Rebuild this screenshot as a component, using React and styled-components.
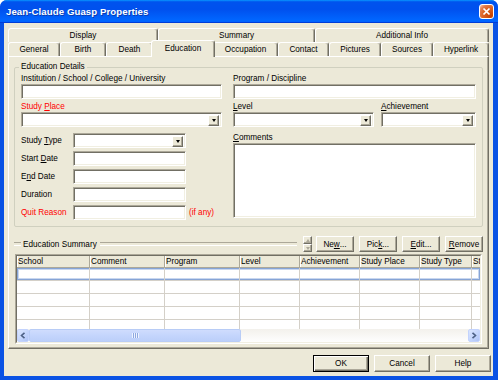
import React from 'react';
import styled, { createGlobalStyle, css } from 'styled-components';

const GlobalStyle = createGlobalStyle`
  html, body { margin: 0; padding: 0; background: #fff; }
  body {
    font-family: "Liberation Sans", Arial, sans-serif;
    font-size: 8.2px;
    color: #000;
  }
  * { box-sizing: border-box; }
`;

const raised = css`
  background: #ece9d8;
  border: 1px solid;
  border-color: #fff #716f64 #716f64 #fff;
  box-shadow: inset -1px -1px 0 #aca899;
`;

const sunken = css`
  background: #fff;
  border: 1px solid;
  border-color: #aca899 #fff #fff #aca899;
  box-shadow: inset 1px 1px 0 #716f64, inset -1px -1px 0 #f1efe2;
`;

const etched = css`
  height: 2px;
  border-top: 1px solid #aca899;
  border-bottom: 1px solid #fff;
`;

const Window = styled.div`
  width: 498px;
  height: 380px;
  display: flex;
  flex-direction: column;
  background: #0a52e4;
  border-radius: 7px 7px 0 0;
  overflow: hidden;
`;

const TitleBar = styled.div`
  height: 23px;
  flex: none;
  display: flex;
  align-items: center;
  justify-content: space-between;
  padding: 0 4px 0 6px;
  background: linear-gradient(to bottom, #0997ff 0%, #0053ee 8%, #0050ee 40%, #0066ff 88%, #0066ff 93%, #005bff 95%, #003dd7 96%, #003dd7 100%);
`;

const Title = styled.div`
  color: #fff;
  font-weight: bold;
  font-size: 9.6px;
  letter-spacing: 0.1px;
  text-shadow: 1px 1px 0 #0a3cb0;
`;

const CloseButton = styled.div`
  width: 15px;
  height: 15px;
  border: 1px solid #fff;
  border-radius: 3px;
  display: flex;
  align-items: center;
  justify-content: center;
  background: radial-gradient(circle at 85% 85%, #c44000 0%, #dc6527 55%, #e07a4a 75%, #f5b99a 95%);
`;

const Body = styled.div`
  flex: 1;
  margin: 0 5px 4px 4px;
  padding: 5px 0 0 4px;
  background: #ece9d8;
  display: flex;
  flex-direction: column;
`;

const TabRow = styled.div`
  display: flex;
  align-items: flex-end;
  height: 14px;
`;

const Tab = styled.div`
  flex: none;
  width: ${p => p.$w}px;
  height: 14px;
  line-height: 13px;
  text-align: center;
  white-space: nowrap;
  background: #ece9d8;
  border-top: 1px solid #fff;
  border-left: 1px solid #fff;
  border-right: 1px solid #716f64;
  box-shadow: inset -1px 0 0 #aca899;
  border-radius: 3px 3px 0 0;
  ${p => p.$active && css`
    width: ${p.$w + 4}px;
    height: 17px;
    line-height: 15px;
    margin: 0 -2px -1px;
    position: relative;
    z-index: 1;
  `}
`;

const Panel = styled.div`
  width: 481px;
  height: 293px;
  flex: none;
  border: 1px solid;
  border-color: #fff #716f64 #716f64 #fff;
  box-shadow: inset -1px -1px 0 #aca899;
  padding: 10px 5px 0 5px;
  display: flex;
  flex-direction: column;
`;

const GroupBox = styled.div`
  height: 160px;
  flex: none;
  border: 1px solid #d0d0bf;
  border-radius: 2px;
  padding: 0 6px;
  display: flex;
  flex-direction: column;
`;

const GroupTitle = styled.div`
  align-self: flex-start;
  height: 10px;
  line-height: 10px;
  margin: -6px 0 0 -2px;
  padding: 0 2px;
  background: #ece9d8;
`;

const Columns = styled.div`
  display: flex;
  gap: 11px;
  margin-top: 2px;
`;

const Column = styled.div`
  width: ${p => p.$w}px;
  flex: none;
  display: flex;
  flex-direction: column;
`;

const Label = styled.div`
  height: 10px;
  line-height: 10px;
  white-space: nowrap;
  margin-top: ${p => p.$top || 0}px;
  color: ${p => (p.$red ? '#f00' : '#000')};
`;

const Field = styled.div`
  ${sunken};
  width: ${p => (p.$w ? `${p.$w}px` : '100%')};
  height: ${p => p.$h || 15}px;
  flex: none;
`;

const ComboBox = styled.div`
  ${sunken};
  width: ${p => (p.$w ? `${p.$w}px` : '100%')};
  height: 15px;
  flex: none;
  display: flex;
  justify-content: flex-end;
  padding: 2px;
`;

const DropButton = styled.div`
  ${raised};
  width: 11px;
  height: 11px;
  display: flex;
  align-items: center;
  justify-content: center;
`;

const Arrow = styled.span`
  width: 0;
  height: 0;
  border-left: 2.5px solid transparent;
  border-right: 2.5px solid transparent;
  border-${p => (p.$up ? 'bottom' : 'top')}: 3px solid ${p => p.$color || '#000'};
`;

const FieldRows = styled.div`
  display: flex;
  flex-direction: column;
  gap: 3px;
  margin-top: 6px;
`;

const FieldRow = styled.div`
  display: flex;
  align-items: center;
  height: 15px;
`;

const RowLabel = styled(Label)`
  width: 52px;
  flex: none;
`;

const Hint = styled.span`
  color: #f00;
  margin-left: 3px;
`;

const PairRow = styled.div`
  display: flex;
  gap: 7px;
  margin-top: 3px;
`;

const SummaryHeader = styled.div`
  height: 16px;
  margin-top: 9px;
  display: flex;
  align-items: center;
`;

const SectionRule = styled.div`
  flex: 1;
  display: flex;
  align-items: center;
  &::before {
    content: '';
    width: 7px;
    ${etched};
  }
  &::after {
    content: '';
    flex: 1;
    margin-left: 3px;
    ${etched};
  }
`;

const SectionLabel = styled.span`
  margin-left: 2px;
  white-space: nowrap;
`;

const Spin = styled.div`
  width: 9px;
  height: 16px;
  margin: 0 4px 0 6px;
  display: flex;
  flex-direction: column;
`;

const SpinPart = styled.div`
  ${raised};
  flex: 1;
  display: flex;
  align-items: center;
  justify-content: center;
`;

const ButtonGroup = styled.div`
  display: flex;
  gap: ${p => p.$gap}px;
`;

const Button = styled.div`
  ${raised};
  width: ${p => p.$w}px;
  height: ${p => p.$h}px;
  display: flex;
  align-items: center;
  justify-content: center;
  white-space: nowrap;
  ${p => p.$default && css`
    border-color: #000;
    box-shadow: inset 1px 1px 0 #fff, inset -1px -1px 0 #716f64, inset -2px -2px 0 #aca899;
  `}
`;

const GridFrame = styled.div`
  height: 90px;
  margin: 2px 1px 0;
  border: 1px solid;
  border-color: #aca899 #fff #fff #aca899;
`;

const GridInner = styled.div`
  height: 100%;
  border: 1px solid;
  border-color: #716f64 #f1efe2 #f1efe2 #716f64;
  background: #fff;
  display: flex;
  flex-direction: column;
  overflow: hidden;
`;

const HeaderRow = styled.div`
  display: flex;
  height: 12px;
  flex: none;
  background: #ece9d8;
  border-bottom: 1px solid #aca899;
`;

const HeaderCell = styled.div`
  width: ${p => p.$w}px;
  flex: none;
  padding-left: 1px;
  line-height: 11px;
  white-space: nowrap;
  overflow: hidden;
  border-right: 1px solid #aca899;
  box-shadow: inset 1px 0 0 #fff;
`;

const GridBody = styled.div`
  flex: 1;
  overflow: hidden;
`;

const GridRow = styled.div`
  display: flex;
  height: 13px;
  border-bottom: 1px solid #d4d0c8;
  ${p => p.$focus && css`
    box-shadow: inset 0 0 0 1px #86a4d6, inset 0 0 0 2px #c9d7ef;
  `}
`;

const GridCell = styled.div`
  width: ${p => p.$w}px;
  flex: none;
  border-right: 1px solid #d4d0c8;
`;

const ScrollBar = styled.div`
  height: 13px;
  flex: none;
  display: flex;
  background: linear-gradient(to bottom, #f3f1ec, #fefefe);
`;

const ScrollButton = styled.div`
  width: 12px;
  height: 13px;
  flex: none;
  border: 1px solid #c3d3fd;
  border-radius: 2px;
  background: linear-gradient(135deg, #dbe6fe 0%, #c2d4fc 60%, #aec3f5 100%);
  display: flex;
  align-items: center;
  justify-content: center;
`;

const Thumb = styled.div`
  width: 212px;
  flex: none;
  border: 1px solid #b8ccf6;
  border-radius: 2px;
  background: linear-gradient(to bottom, #cfdcfd 0%, #c4d5fc 50%, #bccff9 100%);
  display: flex;
  align-items: center;
  justify-content: center;
`;

const Grip = styled.div`
  width: 7px;
  height: 5px;
  background: repeating-linear-gradient(to right, #eef3ff 0 1px, #8fa9e0 1px 2px);
`;

const Track = styled.div`
  flex: 1;
`;

const Footer = styled.div`
  display: flex;
  justify-content: flex-end;
  gap: 5px;
  margin-top: 6px;
  padding-right: 2px;
`;

const upperTabs = [
  ['Display', 150],
  ['Summary', 157],
  ['Additional Info', 174],
];

const lowerTabs = [
  ['General', 52],
  ['Birth', 46],
  ['Death', 47],
  ['Education', 60],
  ['Occupation', 65],
  ['Contact', 51],
  ['Pictures', 52],
  ['Sources', 52],
  ['Hyperlink', 56],
];

// last column is cut by the grid edge in the original
const columns = [
  ['School', 73],
  ['Comment', 75],
  ['Program', 75],
  ['Level', 60],
  ['Achievement', 60],
  ['Study Place', 60],
  ['Study Type', 52],
  ['St', 40],
];

const Combo = ({ w }) => (
  <ComboBox $w={w}>
    <DropButton><Arrow /></DropButton>
  </ComboBox>
);

const Chevron = ({ dir }) => (
  <svg width="6" height="7" viewBox="0 0 6 7">
    <path
      d={dir === 'left' ? 'M4.5 0.8L1.5 3.5L4.5 6.2' : 'M1.5 0.8L4.5 3.5L1.5 6.2'}
      fill="none"
      stroke="#4d6185"
      strokeWidth="1.6"
    />
  </svg>
);

export default function App() {
  return (
    <>
      <GlobalStyle />
      <Window>
        <TitleBar>
          <Title>Jean-Claude Guasp Properties</Title>
          <CloseButton>
            <svg width="9" height="9" viewBox="0 0 9 9">
              <path d="M1.5 1.5L7.5 7.5M7.5 1.5L1.5 7.5" stroke="#fff" strokeWidth="1.7" />
            </svg>
          </CloseButton>
        </TitleBar>
        <Body>
          <TabRow>
            {upperTabs.map(([name, w]) => (
              <Tab key={name} $w={w}>{name}</Tab>
            ))}
          </TabRow>
          <TabRow>
            {lowerTabs.map(([name, w]) => (
              <Tab key={name} $w={w} $active={name === 'Education'}>{name}</Tab>
            ))}
          </TabRow>
          <Panel>
            <GroupBox>
              <GroupTitle>Education Details</GroupTitle>
              <Columns>
                <Column $w={201}>
                  <Label>Institution / School / College / University</Label>
                  <Field />
                  <Label $top={3} $red>Study <u>P</u>lace</Label>
                  <Combo />
                  <FieldRows>
                    <FieldRow>
                      <RowLabel>Study <u>T</u>ype</RowLabel>
                      <Combo w={113} />
                    </FieldRow>
                    <FieldRow>
                      <RowLabel>Start <u>D</u>ate</RowLabel>
                      <Field $w={113} />
                    </FieldRow>
                    <FieldRow>
                      <RowLabel>E<u>n</u>d Date</RowLabel>
                      <Field $w={113} />
                    </FieldRow>
                    <FieldRow>
                      <RowLabel>Duration</RowLabel>
                      <Field $w={113} />
                    </FieldRow>
                    <FieldRow>
                      <RowLabel $red>Quit Reason</RowLabel>
                      <Field $w={113} />
                      <Hint>(if any)</Hint>
                    </FieldRow>
                  </FieldRows>
                </Column>
                <Column $w={243}>
                  <Label>Program / Discipline</Label>
                  <Field />
                  <PairRow>
                    <Column $w={141}>
                      <Label><u>L</u>evel</Label>
                      <Combo />
                    </Column>
                    <Column $w={95}>
                      <Label><u>A</u>chievement</Label>
                      <Combo />
                    </Column>
                  </PairRow>
                  <Label $top={6}><u>C</u>omments</Label>
                  <Field $h={75} />
                </Column>
              </Columns>
            </GroupBox>

            <SummaryHeader>
              <SectionRule>
                <SectionLabel>Education Summary</SectionLabel>
              </SectionRule>
              <Spin>
                <SpinPart><Arrow $up $color="#aca899" /></SpinPart>
                <SpinPart><Arrow $color="#aca899" /></SpinPart>
              </Spin>
              <ButtonGroup $gap={5}>
                <Button $w={38} $h={16}>Ne<u>w</u>...</Button>
                <Button $w={38} $h={16}>Pic<u>k</u>...</Button>
                <Button $w={38} $h={16}><u>E</u>dit...</Button>
                <Button $w={38} $h={16}><u>R</u>emove</Button>
              </ButtonGroup>
            </SummaryHeader>

            <GridFrame>
              <GridInner>
                <HeaderRow>
                  {columns.map(([name, w]) => (
                    <HeaderCell key={name} $w={w}>{name}</HeaderCell>
                  ))}
                </HeaderRow>
                <GridBody>
                  {[0, 1, 2, 3, 4].map(r => (
                    <GridRow key={r} $focus={r === 0}>
                      {columns.map(([name, w]) => (
                        <GridCell key={name} $w={w} />
                      ))}
                    </GridRow>
                  ))}
                </GridBody>
                <ScrollBar>
                  <ScrollButton><Chevron dir="left" /></ScrollButton>
                  <Thumb><Grip /></Thumb>
                  <Track />
                  <ScrollButton><Chevron dir="right" /></ScrollButton>
                </ScrollBar>
              </GridInner>
            </GridFrame>
          </Panel>
          <Footer>
            <Button $w={56} $h={17} $default>OK</Button>
            <Button $w={56} $h={17}>Cancel</Button>
            <Button $w={56} $h={17}>Help</Button>
          </Footer>
        </Body>
      </Window>
    </>
  );
}
